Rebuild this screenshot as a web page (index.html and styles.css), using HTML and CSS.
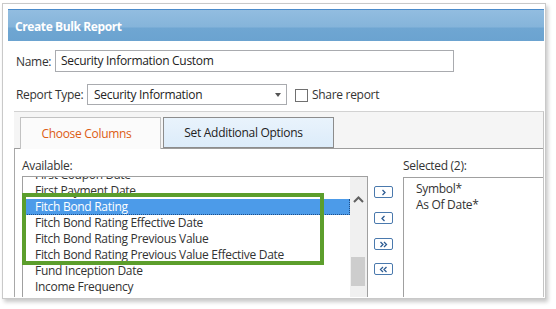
FILE: index.html
```html
<!DOCTYPE html>
<html>
<head>
<meta charset="utf-8">
<link rel="stylesheet" href="styles.css">
</head>
<body>
<div class="frame">
  <div class="titlebar">Create Bulk Report</div>
  <div class="row name-row">
    <span class="lbl lbl-name">Name:</span>
    <div class="input">Security Information Custom</div>
  </div>
  <div class="row type-row">
    <span class="lbl lbl-type">Report Type:</span>
    <div class="select"><span>Security Information</span><span class="caret"></span></div>
    <span class="checkbox"></span><span class="share">Share report</span>
  </div>
  <div class="tabs-wrap">
    <div class="tabs">
      <div class="tab active">Choose Columns</div>
      <div class="tab other">Set Additional Options</div>
    </div>
    <div class="panel">
      <div class="col avail">
        <div class="cap">Available:</div>
        <div class="listbox">
          <div class="items">
            <div class="item">First Coupon Date</div>
            <div class="item">First Payment Date</div>
            <div class="item selected">Fitch Bond Rating</div>
            <div class="item">Fitch Bond Rating Effective Date</div>
            <div class="item">Fitch Bond Rating Previous Value</div>
            <div class="item">Fitch Bond Rating Previous Value Effective Date</div>
            <div class="item">Fund Inception Date</div>
            <div class="item">Income Frequency</div>
          </div>
          <div class="scrollbar">
            <svg class="up" width="11" height="7" viewBox="0 0 11 7"><path d="M1 6 L5.5 1.5 L10 6" fill="none" stroke="#606060" stroke-width="2"/></svg>
            <div class="thumb"></div>
          </div>
        </div>
      </div>
      <div class="movebtns">
        <div class="mbtn b1"><svg width="7" height="7" viewBox="0 0 7 7"><path d="M2.5 1 L5 3.5 L2.5 6" fill="none" stroke="#2d5c93" stroke-width="1.3"/></svg></div>
        <div class="mbtn b2"><svg width="7" height="7" viewBox="0 0 7 7"><path d="M4.5 1 L2 3.5 L4.5 6" fill="none" stroke="#2d5c93" stroke-width="1.3"/></svg></div>
        <div class="mbtn b3"><svg width="9" height="7" viewBox="0 0 9 7"><path d="M1.5 1 L4 3.5 L1.5 6 M5 1 L7.5 3.5 L5 6" fill="none" stroke="#2d5c93" stroke-width="1.3"/></svg></div>
        <div class="mbtn b4"><svg width="9" height="7" viewBox="0 0 9 7"><path d="M4 1 L1.5 3.5 L4 6 M7.5 1 L5 3.5 L7.5 6" fill="none" stroke="#2d5c93" stroke-width="1.3"/></svg></div>
      </div>
      <div class="col sel">
        <div class="cap">Selected (2):</div>
        <div class="listbox selbox">
          <div class="sitems">
            <div class="item">Symbol*</div>
            <div class="item">As Of Date*</div>
          </div>
        </div>
      </div>
      <div class="highlight"></div>
    </div>
  </div>
</div>
</body>
</html>
```
FILE: styles.css
```css
* { box-sizing: border-box; }
html, body { margin: 0; padding: 0; background: #fff; }
body {
  font-family: "Open Sans", "Noto Sans", sans-serif;
  font-size: 12px;
  letter-spacing: -0.3px;
  color: #333;
  width: 556px;
  height: 309px;
  overflow: hidden;
}
.frame {
  margin: 3px 0 0 2px;
  width: 544px;
  height: 296px;
  border: 1px solid #c9c9c9;
  background: #fff;
  box-shadow: 2px 3px 4px rgba(0,0,0,0.22);
  padding: 5px 1px 0 5px;
  overflow: hidden;
}
.titlebar {
  height: 32px;
  border-top: 1px solid #4a8bcb;
  background: linear-gradient(to bottom, #92bde0 0%, #85b4da 55%, #6fa6d2 58%, #6ba3d0 100%);
  color: #fff;
  font-weight: bold;
  font-size: 12px;
  letter-spacing: -0.4px;
  line-height: 30px;
  padding-top: 2px;
  padding-left: 7px;
}
.row { display: flex; align-items: center; padding-left: 8px; }
.name-row { margin-top: 9px; height: 22px; }
.type-row { margin-top: 12px; height: 21px; }
.lbl { color: #333; }
.lbl-name { width: 39px; }
.lbl-type { width: 71px; }
.input {
  width: 399px;
  height: 22px;
  border: 1px solid #a9abaf;
  padding-left: 5px;
  line-height: 20px;
  color: #222;
}
.select {
  width: 200px;
  height: 21px;
  border: 1px solid #a9abaf;
  padding-left: 6px;
  line-height: 19px;
  color: #222;
  display: flex;
  justify-content: space-between;
  align-items: center;
  padding-right: 5px;
}
.caret {
  width: 0; height: 0;
  border-left: 3.5px solid transparent;
  border-right: 3.5px solid transparent;
  border-top: 4px solid #555;
}
.checkbox {
  width: 13px; height: 13px;
  border: 1px solid #707070;
  margin-left: 8px;
  margin-top: 2px;
  background: #fff;
}
.share { margin-left: 4px; color: #333; }
.tabs-wrap {
  margin-top: 6px;
  margin-left: 6px;
  width: 530px;
  height: 186px;
  background: #f5f5f5;
  border-top: 1px solid #d2d2d2;
  border-right: 1px solid #c4c4c4;
  display: flex;
  flex-direction: column;
}
.tabs {
  display: flex;
  gap: 2px;
  padding: 5px 0 0 6px;
  height: 36px;
}
.tab {
  height: 31px;
  display: flex;
  align-items: center;
  justify-content: center;
}
.tab.active {
  width: 141px;
  height: 32px;
  background: #fbfbfb;
  border: 1px solid #c2c2c2;
  border-bottom: none;
  color: #dd5c14;
  position: relative;
  z-index: 2;
  padding-right: 8px;
}
.tab.other {
  width: 171px;
  background: linear-gradient(to bottom, #e9f3fc, #dcecfa);
  border: 1px solid #8c8c8c;
  color: #222;
  padding-right: 10px;
}
.panel {
  position: relative;
  flex: 1;
  background: #fff;
  border-top: 1px solid #9d9d9d;
  border-left: 1px solid #a8a8a8;
  display: flex;
  padding-left: 7px;
  overflow: hidden;
}
.col { display: flex; flex-direction: column; }
.cap { margin-top: 9px; height: 16px; line-height: 16px; margin-bottom: 2px; color: #333; }
.avail { width: 346px; }
.listbox {
  border: 1px solid #a0a0a0;
  border-bottom: none;
  flex: 1;
  display: flex;
  overflow: hidden;
}
.items { flex: 1; margin-top: -10px; }
.item { height: 16px; line-height: 16px; padding-left: 12px; color: #333; white-space: nowrap; }
.item.selected {
  background: #4c9be9;
  color: #fff;
  border-right: 1px dotted #1d4f8a;
  border-bottom: 1px dotted #1d4f8a;
  line-height: 15px;
}
.scrollbar {
  width: 17px;
  background: #f0f0f0;
  position: relative;
}
.scrollbar .up { position: absolute; left: 3px; top: 19px; }
.thumb {
  position: absolute;
  left: 1px; top: 80px;
  width: 14px; height: 29px;
  background: #cdcdcd;
}
.movebtns {
  width: 19px;
  margin-left: 6px;
  display: flex;
  flex-direction: column;
  padding-top: 37px;
}
.mbtn {
  width: 19px;
  height: 12px;
  border: 1px solid #4a79ad;
  border-radius: 2px;
  background: #fff;
  display: flex;
  align-items: center;
  justify-content: center;
}
.b2 { margin-top: 14px; }
.b3 { margin-top: 14px; }
.b4 { margin-top: 13px; }
.sel { margin-left: 10px; flex: 1; }
.selbox { margin-top: 1px; border-right: none; }
.sitems { padding-top: 3px; }
.highlight {
  position: absolute;
  left: 7px;
  top: 44px;
  width: 302px;
  height: 72px;
  border: 4px solid #5c9e2c;
  z-index: 3;
}
```
